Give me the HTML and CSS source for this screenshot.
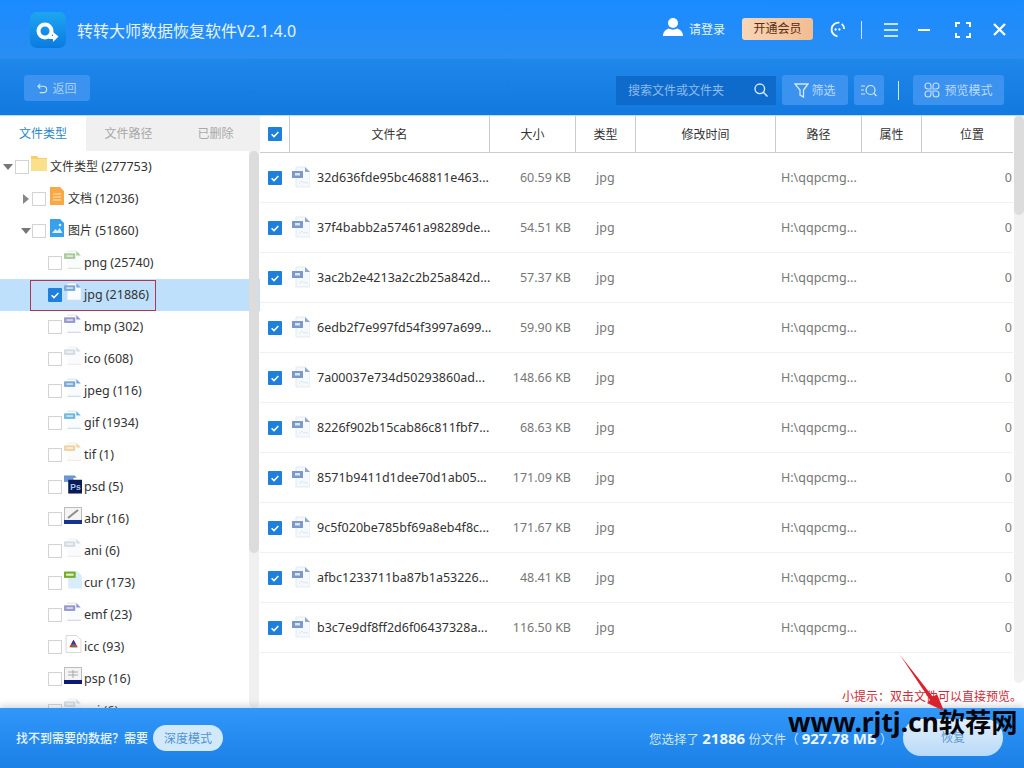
FILE: index.html
```html
<!DOCTYPE html>
<html lang="zh-CN">
<head>
<meta charset="utf-8">
<title>转转大师数据恢复软件</title>
<link rel="stylesheet" href="styles.css">
</head>
<body>
<svg class="defs" width="0" height="0" aria-hidden="true">
  <symbol id="ft" viewBox="0 0 16 18">
    <path d="M3 1h8l4 4v12H3z" fill="#f9fbfd"/>
    <path d="M3 1h8" stroke="currentColor" stroke-width=".5" opacity=".5"/>
    <path d="M11 1l4 4h-4z" fill="currentColor"/>
    <rect x="0" y="3" width="10" height="5" fill="currentColor"/>
    <rect x="2" y="4.700" width="6" height="1.500" fill="#fff" opacity=".65"/>
    <path d="M3 16.500h12" stroke="currentColor" stroke-width=".7" opacity=".55"/>
  </symbol>
  <symbol id="rowfile" viewBox="0 0 18 22">
    <path d="M4 1h9l5 5v15H4z" fill="#f6f9fc" stroke="#d9e3ee" stroke-width=".7"/>
    <path d="M13 1l5 5h-5z" fill="#8fa9cd"/>
    <rect x="0" y="5" width="11" height="7" fill="#7b99c9"/>
    <rect x="3" y="7" width="5" height="2.500" fill="#dbe6f5"/>
    <path d="M7 18l3-3 2 2 2-1 2 2" stroke="#dbe5ef" fill="none"/>
  </symbol>
  <symbol id="chk" viewBox="0 0 14 14">
    <rect width="14" height="14" rx="1" fill="#1f7fdc"/>
    <path d="M3.600 7.200l2.400 2.400 4.400-4.600" fill="none" stroke="#fff" stroke-width="1.500"/>
  </symbol>
</svg>

<div class="app">
  <header class="titlebar">
    <div class="logo">
      <svg viewBox="0 0 36 36" width="36" height="36"><defs><linearGradient id="lg" x1="0" y1="0" x2="0" y2="1"><stop offset="0" stop-color="#1ea6f2"/><stop offset="1" stop-color="#0a7be0"/></linearGradient></defs><rect width="36" height="36" rx="7" fill="url(#lg)"/><circle cx="15" cy="19" r="6.500" fill="none" stroke="#fff" stroke-width="4"/><path d="M19 24h4v-4l5.500 4.500L23 30v-3h-4z" fill="#fff"/></svg>
    </div>
    <h1 class="app-title">转转大师数据恢复软件V2.1.4.0</h1>
    <div class="title-actions">
      <svg class="user-ico" viewBox="0 0 20 20" width="20" height="20"><circle cx="10" cy="6" r="5" fill="#fff"/><path d="M0 19c0-5 4-7 6-7.500 2 1.500 6 1.500 8 0 2 .5 6 2.500 6 7.500z" fill="#fff"/></svg>
      <span class="login">请登录</span>
      <span class="vip">开通会员</span>
      <svg class="smile" viewBox="0 0 18 18" width="17" height="17"><path d="M11 1.800A7.200 7.200 0 1 0 9 16.200" fill="none" stroke="#fff" stroke-width="1.900"/><path d="M13.500 3A7.200 7.200 0 0 1 16 8.500" fill="none" stroke="#fff" stroke-width="1.900"/><circle cx="7" cy="9" r="1.200" fill="#fff"/><circle cx="11" cy="9" r="1.200" fill="#fff"/></svg>
      <span class="vline title-vline"></span>
      <svg class="menu-ico" viewBox="0 0 15 14" width="14" height="14" preserveAspectRatio="none"><path d="M0 1h15M0 7h15M0 13h15" stroke="#fff" stroke-width="1.600"/></svg>
      <svg class="min-ico" viewBox="0 0 12 2" width="12" height="2"><rect width="12" height="2" fill="#fff"/></svg>
      <svg class="full-ico" viewBox="0 0 16 16" width="16" height="16"><path d="M1 5V1h4M11 1h4v4M15 11v4h-4M5 15H1v-4" fill="none" stroke="#fff" stroke-width="2"/></svg>
      <svg class="close-ico" viewBox="0 0 13 13" width="13" height="13"><path d="M1 1l11 11M12 1L1 12" stroke="#fff" stroke-width="2.300"/></svg>
    </div>
  </header>

  <div class="toolbar">
    <button class="tbtn back"><svg viewBox="0 0 12 12" width="11" height="11"><path d="M3.500 1L1 3.500 3.500 6M1 3.500h6a3.500 3.500 0 0 1 0 7H3" fill="none" stroke="#cfe4fb" stroke-width="1.200"/></svg>返回</button>
    <div class="toolbar-right">
      <div class="search"><span>搜索文件或文件夹</span><svg viewBox="0 0 14 14" width="14" height="14"><circle cx="5.800" cy="5.800" r="4.800" fill="none" stroke="#d6e8fb" stroke-width="1.400"/><path d="M9.300 9.300L13.500 13.500" stroke="#d6e8fb" stroke-width="1.500"/></svg></div>
      <button class="tbtn filter"><svg viewBox="0 0 15 15" width="15" height="15"><path d="M1 1h13L9.500 7v7L6 12V7z" fill="none" stroke="#d6e8fb" stroke-width="1.300"/></svg>筛选</button>
      <button class="tbtn find"><svg viewBox="0 0 16 13" width="16" height="13"><path d="M0 2h4M0 6h3M0 10h4" stroke="#d6e8fb"/><circle cx="9.500" cy="6" r="4.500" fill="none" stroke="#d6e8fb" stroke-width="1.200"/><path d="M13 9.500l2.500 2.500" stroke="#d6e8fb" stroke-width="1.200"/></svg></button>
      <span class="vline tool-vline"></span>
      <button class="tbtn preview"><svg viewBox="0 0 16 16" width="16" height="16"><g fill="none" stroke="#c6dff9" stroke-width="1.100"><path d="M4 1a3 3 0 0 1 3 3v3H4a3 3 0 0 1 0-6zM12 1a3 3 0 0 0-3 3v3h3a3 3 0 0 0 0-6zM4 15a3 3 0 0 0 3-3V9H4a3 3 0 0 0 0 6zM12 15a3 3 0 0 1-3-3V9h3a3 3 0 0 1 0 6z"/></g></svg>预览模式</button>
    </div>
  </div>

  <main class="content">
    <aside class="side">
      <div class="tabs">
        <span class="tab active">文件类型</span>
        <span class="tab">文件路径</span>
        <span class="tab">已删除</span>
      </div>
      <div class="tree-wrap">
        <ul class="tree">
          <li class="node l0"><i class="caret down"></i><i class="cb"></i>
            <svg class="nic folder" viewBox="0 0 16 15"><path d="M0 0h6l1.500 2H16v13H0z" fill="#f7cf63"/><path d="M0 3h16v12H0z" fill="#fbe08c"/></svg><span><span class="cj">文件类型</span> (277753)</span></li>
          <li class="node l1"><i class="caret right"></i><i class="cb"></i>
            <svg class="nic" viewBox="0 0 14 18"><path d="M0 0h10l4 4v14H0z" fill="#f6a944"/><path d="M3 7h8M3 10h8M3 13h8" stroke="#fde3bb"/></svg><span><span class="cj">文档</span> (12036)</span></li>
          <li class="node l1"><i class="caret down"></i><i class="cb"></i>
            <svg class="nic" viewBox="0 0 14 18"><path d="M0 0h10l4 4v14H0z" fill="#39a0ee"/><path d="M2 14l3.500-4 2 2 2-3 3 5z" fill="#e0f1fd"/><circle cx="10" cy="6" r="1.300" fill="#e0f1fd"/></svg><span><span class="cj">图片</span> (51860)</span></li>
          <li class="node l2"><i class="cb"></i><svg class="fic png"><use href="#ft"/></svg><span>png (25740)</span></li>
          <li class="node l2 sel"><svg class="cbx"><use href="#chk"/></svg><svg class="fic jpg"><use href="#ft"/></svg><span>jpg (21886)</span><b class="redbox"></b></li>
          <li class="node l2"><i class="cb"></i><svg class="fic bmp"><use href="#ft"/></svg><span>bmp (302)</span></li>
          <li class="node l2"><i class="cb"></i><svg class="fic ico"><use href="#ft"/></svg><span>ico (608)</span></li>
          <li class="node l2"><i class="cb"></i><svg class="fic jpg"><use href="#ft"/></svg><span>jpeg (116)</span></li>
          <li class="node l2"><i class="cb"></i><svg class="fic gif"><use href="#ft"/></svg><span>gif (1934)</span></li>
          <li class="node l2"><i class="cb"></i><svg class="fic tif"><use href="#ft"/></svg><span>tif (1)</span></li>
          <li class="node l2"><i class="cb"></i><svg class="fic" viewBox="0 0 17 18"><path d="M0 1h10l2 2H0z" fill="#5d8fd0"/><rect x="0" y="2" width="9" height="5" fill="#6d9ad6"/><rect x="4" y="5" width="13" height="13" fill="#0b1a55"/><text x="6" y="15" class="ps">Ps</text></svg><span>psd (5)</span></li>
          <li class="node l2"><i class="cb"></i><svg class="fic" viewBox="0 0 18 18"><rect x=".5" y=".5" width="17" height="15" fill="#f4f4f4" stroke="#bbb"/><path d="M4 11L14 3" stroke="#8d8d8d" stroke-width="2"/><rect y="13" width="18" height="4" fill="#16338f"/></svg><span>abr (16)</span></li>
          <li class="node l2"><i class="cb"></i><svg class="fic ico"><use href="#ft"/></svg><span>ani (6)</span></li>
          <li class="node l2"><i class="cb"></i><svg class="fic" viewBox="0 0 17 18"><path d="M4 1h9l4 4v12H4z" fill="#d8ecfb"/><rect y="1" width="11" height="6" fill="#78ac2e"/><rect x="2" y="3" width="7" height="2" fill="#e6f3c9"/></svg><span>cur (173)</span></li>
          <li class="node l2"><i class="cb"></i><svg class="fic bmp"><use href="#ft"/></svg><span>emf (23)</span></li>
          <li class="node l2"><i class="cb"></i><svg class="fic" viewBox="0 0 17 18"><path d="M2 1h10l4 4v12H2z" fill="#fff" stroke="#ccc" stroke-width=".7"/><path d="M9 5l-4 7h8z" fill="#d52b4a"/><path d="M9 5l-2 4h4z" fill="#1f3fae"/><path d="M9 9l-2 3h5z" fill="#2c9a4c"/></svg><span>icc (93)</span></li>
          <li class="node l2"><i class="cb"></i><svg class="fic" viewBox="0 0 18 18"><rect x=".5" y=".5" width="17" height="15" fill="#f4f4f4" stroke="#bbb"/><path d="M4 5h10M4 8h10M9 3v8" stroke="#999" stroke-width=".8"/><rect y="13" width="18" height="4" fill="#0c1a78"/></svg><span>psp (16)</span></li>
          <li class="node l2"><i class="cb"></i><svg class="fic ico"><use href="#ft"/></svg><span>sai (6)</span></li>
        </ul>
        <div class="vbar tree-bar"><i></i></div>
      </div>
    </aside>

    <section class="list">
      <div class="tbl">
        <div class="thead">
          <div class="th"><svg class="cbx"><use href="#chk"/></svg></div>
          <div class="th">文件名</div><div class="th">大小</div><div class="th">类型</div><div class="th">修改时间</div><div class="th">路径</div><div class="th">属性</div><div class="th last">位置</div>
        </div>
        <div class="trow"><div class="c-chk"><svg class="cbx"><use href="#chk"/></svg></div><div class="c-name"><svg class="rfic"><use href="#rowfile"/></svg><span>32d636fde95bc468811e463...</span></div><div class="c-size">60.59 KB</div><div class="c-type">jpg</div><div></div><div class="c-path">H:\qqpcmg...</div><div></div><div class="c-pos">0</div></div>
        <div class="trow"><div class="c-chk"><svg class="cbx"><use href="#chk"/></svg></div><div class="c-name"><svg class="rfic"><use href="#rowfile"/></svg><span>37f4babb2a57461a98289de...</span></div><div class="c-size">54.51 KB</div><div class="c-type">jpg</div><div></div><div class="c-path">H:\qqpcmg...</div><div></div><div class="c-pos">0</div></div>
        <div class="trow"><div class="c-chk"><svg class="cbx"><use href="#chk"/></svg></div><div class="c-name"><svg class="rfic"><use href="#rowfile"/></svg><span>3ac2b2e4213a2c2b25a842d...</span></div><div class="c-size">57.37 KB</div><div class="c-type">jpg</div><div></div><div class="c-path">H:\qqpcmg...</div><div></div><div class="c-pos">0</div></div>
        <div class="trow"><div class="c-chk"><svg class="cbx"><use href="#chk"/></svg></div><div class="c-name"><svg class="rfic"><use href="#rowfile"/></svg><span>6edb2f7e997fd54f3997a699...</span></div><div class="c-size">59.90 KB</div><div class="c-type">jpg</div><div></div><div class="c-path">H:\qqpcmg...</div><div></div><div class="c-pos">0</div></div>
        <div class="trow"><div class="c-chk"><svg class="cbx"><use href="#chk"/></svg></div><div class="c-name"><svg class="rfic"><use href="#rowfile"/></svg><span>7a00037e734d50293860ad...</span></div><div class="c-size">148.66 KB</div><div class="c-type">jpg</div><div></div><div class="c-path">H:\qqpcmg...</div><div></div><div class="c-pos">0</div></div>
        <div class="trow"><div class="c-chk"><svg class="cbx"><use href="#chk"/></svg></div><div class="c-name"><svg class="rfic"><use href="#rowfile"/></svg><span>8226f902b15cab86c811fbf7...</span></div><div class="c-size">68.63 KB</div><div class="c-type">jpg</div><div></div><div class="c-path">H:\qqpcmg...</div><div></div><div class="c-pos">0</div></div>
        <div class="trow"><div class="c-chk"><svg class="cbx"><use href="#chk"/></svg></div><div class="c-name"><svg class="rfic"><use href="#rowfile"/></svg><span>8571b9411d1dee70d1ab05...</span></div><div class="c-size">171.09 KB</div><div class="c-type">jpg</div><div></div><div class="c-path">H:\qqpcmg...</div><div></div><div class="c-pos">0</div></div>
        <div class="trow"><div class="c-chk"><svg class="cbx"><use href="#chk"/></svg></div><div class="c-name"><svg class="rfic"><use href="#rowfile"/></svg><span>9c5f020be785bf69a8eb4f8c...</span></div><div class="c-size">171.67 KB</div><div class="c-type">jpg</div><div></div><div class="c-path">H:\qqpcmg...</div><div></div><div class="c-pos">0</div></div>
        <div class="trow"><div class="c-chk"><svg class="cbx"><use href="#chk"/></svg></div><div class="c-name"><svg class="rfic"><use href="#rowfile"/></svg><span>afbc1233711ba87b1a53226...</span></div><div class="c-size">48.41 KB</div><div class="c-type">jpg</div><div></div><div class="c-path">H:\qqpcmg...</div><div></div><div class="c-pos">0</div></div>
        <div class="trow"><div class="c-chk"><svg class="cbx"><use href="#chk"/></svg></div><div class="c-name"><svg class="rfic"><use href="#rowfile"/></svg><span>b3c7e9df8ff2d6f06437328a...</span></div><div class="c-size">116.50 KB</div><div class="c-type">jpg</div><div></div><div class="c-path">H:\qqpcmg...</div><div></div><div class="c-pos">0</div></div>
      </div>
      <div class="vbar list-bar"><i></i></div>
      <p class="tip">小提示：双击文件可以直接预览。</p>
    </section>
  </main>

  <footer class="foot">
    <span class="need">找不到需要的数据？需要</span>
    <button class="deep">深度模式</button>
    <span class="sum">您选择了 <b>21886</b> 份文件（ <b>927.78 MB</b> ）</span>
    <button class="recover">恢复</button>
  </footer>

  <svg class="arrow" viewBox="0 0 60 70" width="60" height="70"><path d="M1 0L34 42l4-3 7 17-17-8 3-3z" fill="#d8232e"/></svg>
  <div class="mark">www.rjtj.cn软荐网</div>
</div>
</body>
</html>
```

FILE: styles.css
```css
* { box-sizing: border-box; }
html, body { margin: 0; padding: 0; }
body {
  width: 1024px; height: 768px; overflow: hidden; background: #fff;
  font-family: "Noto Sans", "Noto Sans CJK SC", sans-serif; font-size: 12px; color: #333;
}
.defs { position: absolute; }
.app { position: relative; width: 1024px; height: 768px; display: flex; flex-direction: column; overflow: hidden; }

.titlebar {
  height: 60px; display: flex; align-items: center; padding: 0 18px 0 30px;
  background: linear-gradient(#1a8bff, #2a8ef2); color: #fff; border-bottom: 1px solid #2583e6;
}
.logo { width: 37px; height: 36px; display: flex; margin-top: 1px; }
.app-title { margin: 2px 0 0 10px; font-size: 16px; font-weight: 400; color: #e6f2ff; line-height: 22px; }
.title-actions { margin-left: auto; display: flex; align-items: center; }
.user-ico { margin-top: -5px; }
.login { margin-left: 6px; color: #e8f3ff; font-size: 12px; width: 37px; white-space: nowrap; margin-top: -2px; }
.vip {
  margin-left: 16px; width: 71px; height: 22px; border-radius: 3px; background: linear-gradient(90deg, #f7d6b7, #f2bd92);
  color: #5a2b10; font-size: 12px; line-height: 22px; text-align: center; margin-top: -2px;
}
.smile { margin-left: 16px; }
.vline { display: block; width: 1px; background: #d4e8fc; }
.title-vline { height: 18px; margin-left: 15px; }
.menu-ico { margin-left: 22px; }
.min-ico { margin-left: 20px; }
.full-ico { margin-left: 25px; }
.close-ico { margin-left: 22px; }

.toolbar {
  height: 55px; display: flex; align-items: center; padding: 5px 20px 0 24px;
  background: linear-gradient(#1f86ec, #1279de);
}
.tbtn {
  display: flex; align-items: center; justify-content: center; border: 0; border-radius: 3px; padding: 0;
  background: #3b93ef; color: #bcdaf8; font: inherit; font-size: 12px;
}
.back { width: 66px; height: 26px; gap: 4px; margin-top: -4px; color: #a9cff6; }
.toolbar-right { margin-left: auto; display: flex; align-items: center; }
.search {
  width: 160px; height: 29px; display: flex; align-items: center; justify-content: space-between;
  background: #0f6bcb; color: #8dbcec; padding: 0 8px 0 12px;
}
.filter { width: 66px; height: 30px; margin-left: 6px; gap: 2px; }
.find { width: 30px; height: 30px; margin-left: 6px; }
.tool-vline { height: 19px; margin: 0 14px; }
.preview { width: 91px; height: 30px; gap: 4px; }

.content { flex: 1; min-height: 0; display: flex; border-top: 1px solid #b6dcfb; }

.side { width: 260px; display: flex; flex-direction: column; flex: none; }
.tabs { height: 35px; display: flex; background: #f0f0f0; flex: none; }
.tab { width: 87px; padding-right: 2px; text-align: center; line-height: 35px; color: #a8a8a8; font-size: 12px; }
.tab.active { width: 86px; padding-right: 0; background: #fff; color: #2a87c9; }
.tree-wrap { flex: 1; min-height: 0; position: relative; overflow: hidden; }
.tree { list-style: none; margin: 0; padding: 0; }
.node { height: 32px; display: flex; align-items: center; position: relative; font-size: 12.5px; color: #333; white-space: nowrap; }
.node span { line-height: 32px; }
.node .cj { font-size: 12px; }
.l0 { padding-left: 3px; }
.l1 { padding-left: 21px; }
.l2 { padding-left: 48px; }
.caret { width: 0; height: 0; display: block; flex: none; }
.caret.down { border-left: 5px solid transparent; border-right: 5px solid transparent; border-top: 6px solid #777; margin-right: 1px; }
.l0 .caret.down { margin-right: 2px; }
.caret.right { border-top: 5px solid transparent; border-bottom: 5px solid transparent; border-left: 6px solid #888; margin: 0 3px 0 2px; }
.cb { display: block; width: 14px; height: 14px; border: 1px solid #d3d3d3; background: #fff; flex: none; }
.cbx { display: block; width: 14px; height: 14px; flex: none; }
.nic { width: 14px; height: 18px; margin: -6px 4px 0 4px; flex: none; }
.nic.folder { width: 16px; height: 15px; margin: -7px 3px 0 2px; }
.fic { width: 18px; height: 20px; margin: -6px 2px 0 2px; flex: none; }
.png { color: #a9c89b; }
.jpg { color: #7aa8da; }
.bmp { color: #9496cc; }
.ico { color: #d5dbe2; }
.gif { color: #6db8de; }
.tif { color: #eed2a2; }
.ps { font: 700 8px "Liberation Sans", sans-serif; fill: #a7c7ee; }
.sel { background: #bfe0fb; }
.redbox { position: absolute; left: 30px; top: 1px; width: 126px; height: 31px; border: 1px solid #b8324f; }
.vbar { position: absolute; top: 0; right: 0; background: #f0f0f0; border-radius: 0 0 5px 5px; }
.vbar i { display: block; background: #dcdcdc; border-radius: 5px; }
.tree-bar { top: 0; right: 1px; width: 10px; height: 100%; }
.tree-bar i { height: 402px; }

.list { flex: 1; min-width: 0; position: relative; }
.tbl { width: 753px; }
.thead, .trow { display: grid; grid-template-columns: 30px 200px 86px 60px 140px 86px 60px 91px; }
.thead { height: 37px; border-bottom: 1px solid #ccc; }
.th { display: flex; align-items: center; justify-content: center; border-right: 1px solid #ccc; font-size: 12px; color: #333; }
.th.last { border-right: 0; padding-left: 9px; }
.trow { height: 50px; align-items: center; border-bottom: 1px solid #f1f1f1; font-size: 12.5px; color: #777; }
.c-chk { padding-left: 8px; }
.c-name { display: flex; align-items: center; color: #333; white-space: nowrap; padding-left: 2px; }
.c-name span { margin-left: 7px; }
.rfic { width: 18px; height: 22px; flex: none; margin-top: -2px; }
.c-size { text-align: right; padding-right: 5px; white-space: nowrap; }
.c-type { padding-left: 20px; }
.c-path { padding-left: 5px; white-space: nowrap; }
.c-pos { text-align: right; padding-right: 1px; }
.list-bar { right: 0; width: 10px; top: 0; height: 567px; }
.list-bar i { height: 99px; }
.tip { position: absolute; right: 2px; top: 573px; margin: 0; font-size: 12px; line-height: 16px; color: #cf2b36; white-space: nowrap; }

.foot {
  position: relative; height: 60px; flex: none; display: flex; align-items: center;
  background: linear-gradient(#3197f9, #1b80e6); color: #dcecfd; padding-left: 16px;
  box-shadow: 0 -3px 6px rgba(120,130,150,.3);
}
.need { font-size: 12px; font-weight: 500; color: #eaf4fe; }
.deep { margin-left: 5px; width: 70px; height: 26px; border: 0; border-radius: 13px; background: #d2e8fb; color: #4f95d2; font: inherit; font-size: 12px; padding: 0; }
.sum { margin-left: 426px; font-size: 12.5px; color: #cfe4fa; white-space: nowrap; width: 254px; }
.sum b { font-size: 15px; color: #eef6ff; font-weight: 700; }
.recover { width: 100px; height: 37px; margin-top: -2px; border: 0; border-radius: 18px; background: linear-gradient(#e2f0fc, #b8d9f7); color: #5c9bd6; font: inherit; font-size: 12px; padding: 0; }

.arrow { position: absolute; left: 899px; top: 655px; }
.mark {
  position: absolute; left: 788px; top: 704px; font-family: "Noto Sans", "Noto Sans CJK SC", sans-serif;
  font-size: 26.3px; line-height: 36px; font-weight: 700; color: #06060c; white-space: nowrap;
}
```
